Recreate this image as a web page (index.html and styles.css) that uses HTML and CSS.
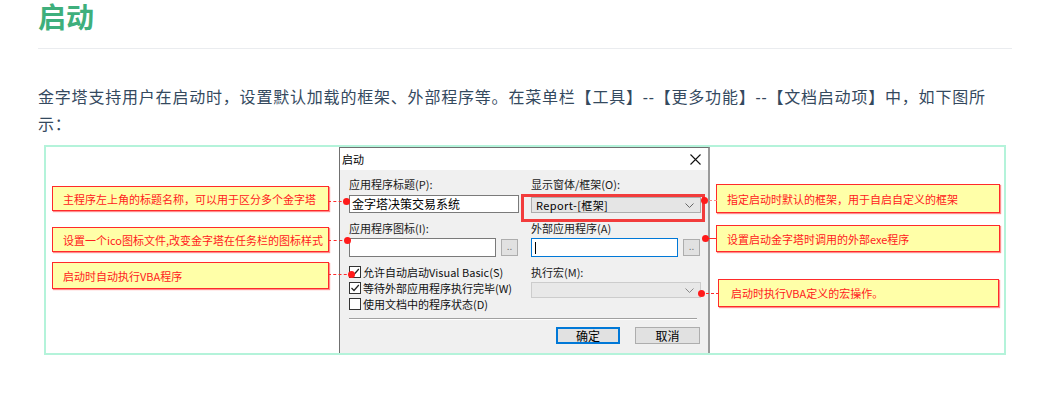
FILE: index.html
```html
<!DOCTYPE html>
<html lang="zh-CN">
<head>
    <meta charset="UTF-8">
    <title>启动</title>
    <link rel="stylesheet" href="styles.css">
</head>
<body>
    <div class="page">
        <!-- 标题 -->
        <h2 class="title">启动</h2>
        <p class="intro">金字塔支持用户在启动时，设置默认加载的框架、外部程序等。在菜单栏【工具】--【更多功能】--【文档启动项】中，如下图所示：</p>

        <!-- 说明图 -->
        <div class="figure">
            <div class="notes notes-left">
                <div class="note note-l1">主程序左上角的标题名称，可以用于区分多个金字塔<span class="link link-l1"></span></div>
                <div class="note note-l2">设置一个ico图标文件,改变金字塔在任务栏的图标样式<span class="link link-l2"></span></div>
                <div class="note note-l3">启动时自动执行VBA程序<span class="link link-l3"></span></div>
            </div>

            <div class="dialog">
                <div class="dialog-bar">
                    <span>启动</span>
                    <svg class="close" width="11" height="11" viewBox="0 0 11 11"><path d="M0.5 0.5 L10.5 10.5 M10.5 0.5 L0.5 10.5" stroke="#111" stroke-width="1.1" fill="none"/></svg>
                </div>
                <div class="dialog-body">
                    <div class="cols">
                        <div class="col">
                            <div class="field-label">应用程序标题(P):</div>
                            <div class="textbox textbox-title">金字塔决策交易系统</div>
                            <div class="field-label gap-top">应用程序图标(I):</div>
                            <div class="picker">
                                <div class="textbox textbox-pick"></div>
                                <span class="browse">..</span>
                            </div>
                            <div class="checks">
                                <div class="check"><span class="box"><svg width="10" height="10" viewBox="0 0 10 10"><path d="M1.5 5 L4 7.5 L8.8 2" stroke="#222" stroke-width="1.2" fill="none"/></svg></span>允许自动启动Visual Basic(S)</div>
                                <div class="check"><span class="box"><svg width="10" height="10" viewBox="0 0 10 10"><path d="M1.5 5 L4 7.5 L8.8 2" stroke="#222" stroke-width="1.2" fill="none"/></svg></span>等待外部应用程序执行完毕(W)</div>
                                <div class="check"><span class="box"></span>使用文档中的程序状态(D)</div>
                            </div>
                        </div>
                        <div class="col">
                            <div class="field-label">显示窗体/框架(O):</div>
                            <div class="combo combo-frame">
                                <span>Report-[框架]</span>
                                <svg width="9" height="5" viewBox="0 0 9 5"><path d="M0.5 0.5 L4.5 4.5 L8.5 0.5" stroke="#666" fill="none"/></svg>
                                <span class="highlight"></span>
                            </div>
                            <div class="field-label gap-top">外部应用程序(A)</div>
                            <div class="picker">
                                <div class="textbox textbox-pick textbox-focus"><span class="caret"></span></div>
                                <span class="browse">..</span>
                            </div>
                            <div class="field-label gap-top">执行宏(M):</div>
                            <div class="combo combo-disabled">
                                <span></span>
                                <svg width="9" height="5" viewBox="0 0 9 5"><path d="M0.5 0.5 L4.5 4.5 L8.5 0.5" stroke="#888" fill="none"/></svg>
                            </div>
                        </div>
                    </div>
                    <div class="sep"></div>
                    <div class="buttons">
                        <button class="btn btn-ok">确定</button>
                        <button class="btn">取消</button>
                    </div>
                </div>
            </div>

            <div class="notes notes-right">
                <div class="note note-r1">指定启动时默认的框架，用于自启自定义的框架<span class="link link-r1"></span></div>
                <div class="note note-r2">设置启动金字塔时调用的外部exe程序<span class="link link-r2"></span></div>
                <div class="note note-r3">启动时执行VBA定义的宏操作。<span class="link link-r3"></span></div>
            </div>
        </div>
    </div>
</body>
</html>
```

FILE: styles.css
```css
* {
    margin: 0;
    padding: 0;
    box-sizing: border-box;
}

body {
    background: #ffffff;
    font-family: "Noto Sans", "Noto Sans CJK SC", sans-serif;
    color: #2c3e50;
}

.page {
    width: 974px;
    margin-left: 38px;
}

/* 标题 */
.title {
    font-size: 28px;
    line-height: 34px;
    font-weight: 700;
    color: #3eaf7c;
    padding-bottom: 14px;
    border-bottom: 1px solid #eaecef;
}

.intro {
    margin-top: 35px;
    font-size: 16px;
    line-height: 27px;
    letter-spacing: 0.8px;
    color: #34495e;
}

/* 说明图 */
.figure {
    display: flex;
    width: 962px;
    height: 210px;
    margin: 7px 0 0 6px;
    border: 2px solid #b4f3da;
}

.notes {
    display: flex;
    flex-direction: column;
}

.notes-left {
    width: 293px;
    padding: 39px 0 0 6px;
}

.notes-right {
    width: 294px;
    padding: 37px 0 0 6px;
}

.note {
    position: relative;
    display: flex;
    align-items: center;
    padding-left: 10px;
    background: #ffffa8;
    border: 1px solid #ff2a2a;
    box-shadow: 1px 1px 1px #ff8c8c;
    color: #ff2020;
    font-family: "Noto Sans CJK SC", sans-serif;
    font-size: 11px;
}

.note-l1 { width: 277px; height: 25px; }
.note-l2 { width: 277px; height: 25px; margin-top: 16px; }
.note-l3 { width: 277px; height: 27px; margin-top: 10px; }

.note-r1 { width: 284px; height: 29px; }
.note-r2 { width: 284px; height: 27px; margin-top: 12px; }
.note-r3 { width: 281px; height: 28px; margin-top: 27px; margin-left: 2px; padding-left: 12px; }

/* 连接线 */
.link {
    position: absolute;
    top: 50%;
    border-top: 1px dashed #ff2a2a;
}

.link::after {
    content: "";
    position: absolute;
    top: -4px;
    width: 7px;
    height: 7px;
    border-radius: 50%;
    background: #ff1a1a;
}

.notes-left .link { left: 100%; }
.notes-left .link::after { right: -3px; }
.notes-right .link { right: 100%; }
.notes-right .link::after { left: -3px; }

.link-l1 { width: 19px; margin-top: 2px; }
.link-l2 { width: 20px; }
.link-l3 { width: 24px; margin-top: -2px; }
.link-r1 { width: 13px; border-top-color: #ff8a8a; margin-top: 1px; }
.link-r2 { width: 12px; border-top-style: solid; margin-top: -1px; }
.link-r3 { width: 18px; }

/* 对话框 */
.dialog {
    display: flex;
    flex-direction: column;
    width: 371px;
    height: 206px;
    border: 1px solid #707070;
    border-right: 2px solid #9a9a9a;
    border-bottom: none;
    background: #f0f0f0;
    font-family: "Noto Sans CJK SC", sans-serif;
    font-size: 11px;
    color: #000000;
}

.dialog-bar {
    height: 22px;
    display: flex;
    align-items: center;
    justify-content: space-between;
    padding: 0 7px 0 2px;
    background: #ffffff;
    line-height: 16px;
}

.dialog-body {
    padding: 6px 7px 0 9px;
}

.cols {
    display: grid;
    grid-template-columns: 170px 170px;
    column-gap: 12px;
}

.col {
    display: flex;
    flex-direction: column;
}

.field-label {
    height: 16px;
    line-height: 16px;
    color: #1a1a1a;
    white-space: nowrap;
}

.field-label.gap-top {
    margin-top: 7px;
}

.textbox {
    height: 18px;
    line-height: 16px;
    padding-left: 2px;
    background: #ffffff;
    border: 1px solid #7a7a7a;
    color: #000;
    font-size: 12px;
}

.textbox-title {
    margin-top: 3px;
}

.picker {
    display: flex;
    align-items: center;
    gap: 5px;
    margin-top: 2px;
    height: 19px;
}

.textbox-pick {
    width: 147px;
    height: 19px;
}

.textbox-focus {
    border-color: #0078d7;
    display: flex;
    align-items: center;
    padding-left: 3px;
}

.caret {
    width: 1px;
    height: 12px;
    background: #000;
}

.browse {
    width: 17px;
    height: 17px;
    line-height: 12px;
    text-align: center;
    background: #e1e1e1;
    border: 1px solid #adadad;
    color: #777;
    font-size: 10px;
}

.checks {
    margin-top: 7px;
}

.check {
    display: flex;
    align-items: center;
    height: 16px;
    gap: 2px;
    color: #111;
    white-space: nowrap;
}

.box {
    flex: none;
    width: 12px;
    height: 12px;
    display: flex;
    align-items: center;
    justify-content: center;
    background: #ffffff;
    border: 1px solid #333333;
}

.combo {
    position: relative;
    display: flex;
    align-items: center;
    justify-content: space-between;
    height: 16px;
    padding: 0 6px 0 4px;
    border: 1px solid #adadad;
}

.combo-frame {
    margin-top: 5px;
    background: #e5e5e5;
    letter-spacing: 0.4px;
}

.combo-disabled {
    margin-top: 2px;
    background: #e8e8e8;
    border-color: #cccccc;
}

/* 红色标注框 */
.highlight {
    position: absolute;
    top: -4px;
    bottom: -10px;
    left: -11px;
    right: -5px;
    border: 3px solid #f23c3c;
}

.sep {
    margin: 6px 4px 0 0;
    border-top: 1px solid #a0a0a0;
    border-bottom: 1px solid #ffffff;
}

.buttons {
    display: flex;
    justify-content: flex-end;
    gap: 15px;
    margin: 7px 1px 0 0;
}

.btn {
    width: 65px;
    height: 17px;
    background: #e1e1e1;
    border: 1px solid #adadad;
    font-family: "Noto Sans CJK SC", sans-serif;
    font-size: 12px;
    line-height: 13px;
    color: #000;
}

.btn-ok {
    width: 64px;
    border: 2px solid #0078d7;
}
```
